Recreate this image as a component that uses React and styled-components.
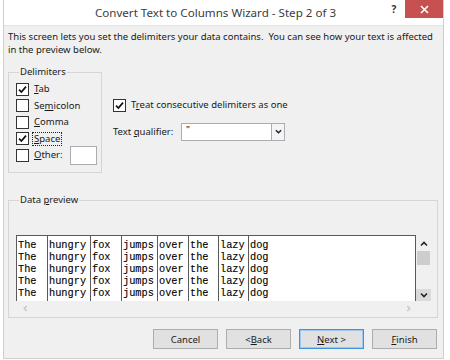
import React from 'react';
import styled, { createGlobalStyle } from 'styled-components';

const colors = {
  page: '#ffffff',
  face: '#f0f0f0',
  frame: '#cfcfcf',
  group: '#d5d5d5',
  text: '#1a1a1a',
  title: '#3c3c3c',
  close: '#c75050',
  boxBorder: '#333333',
  field: '#abadb3',
  preview: '#5a5a5a',
  thumb: '#cdcdcd',
  button: '#e1e1e1',
  buttonBorder: '#adadad',
  defaultBorder: '#3c94e0'
};

const GlobalStyle = createGlobalStyle`
  body {
    margin: 0;
    background: ${colors.page};
    font-family: 'Noto Sans', 'Open Sans', sans-serif;
    color: ${colors.text};
  }
`;

// Window frame
const Window = styled.div`
  margin-left: 3px;
  width: 439px;
  height: 358px;
  border-left: 1px solid ${colors.frame};
  border-right: 1px solid ${colors.frame};
  border-bottom: 1px solid ${colors.frame};
  display: flex;
  flex-direction: column;
`;

const TitleBar = styled.div`
  height: 25px;
  flex-shrink: 0;
  background: #fff;
  display: flex;
  align-items: flex-start;
`;

const Title = styled.div`
  flex: 1;
  text-align: center;
  font-size: 11.6px;
  line-height: 26px;
  color: ${colors.title};
  padding-left: 44px;
`;

const HelpButton = styled.div`
  width: 22px;
  height: 18px;
  font-size: 10px;
  font-weight: 700;
  line-height: 18px;
  text-align: center;
  color: #333;
`;

const CloseButton = styled.div`
  width: 38px;
  height: 18px;
  background: ${colors.close};
  display: flex;
  align-items: center;
  justify-content: center;
`;

const Body = styled.div`
  flex: 1;
  background: ${colors.face};
  border-top: 1px solid #e3e3e3;
  padding: 4px 4px 0 4px;
  display: flex;
  flex-direction: column;
  font-size: 9.5px;
`;

const Intro = styled.p`
  margin: 0;
  line-height: 13px;
`;

const TopRow = styled.div`
  display: flex;
  gap: 11px;
  margin-top: 10px;
`;

const Group = styled.fieldset`
  margin: ${p => p.$top || '0'} 0 0 0;
  border: 1px solid ${colors.group};
  padding: ${p => p.$pad || '3px 4px 6px 7px'};
  width: ${p => p.$width};
  height: ${p => p.$height};
  box-sizing: border-box;
  display: flex;
  flex-direction: column;
  flex-shrink: 0;
`;

const Legend = styled.legend`
  padding: 0 1px;
  margin-left: 3px;
  line-height: 12px;
`;

const CheckRow = styled.label`
  display: flex;
  align-items: center;
  gap: 3px;
  height: 16.5px;
`;

const Box = styled.span`
  width: 11px;
  height: 11px;
  border: 1px solid ${colors.boxBorder};
  background: #fff;
  display: flex;
  align-items: center;
  justify-content: center;
  flex-shrink: 0;
`;

const CheckText = styled.span`
  line-height: 12px;
  border: 1px dotted ${p => (p.$focused ? '#222' : 'transparent')};
  padding: 0 1px;
`;

const OtherInput = styled.span`
  width: 25px;
  height: 17px;
  margin-left: auto;
  background: #fff;
  border: 1px solid ${colors.field};
`;

const Options = styled.div`
  display: flex;
  flex-direction: column;
  padding-top: 31px;
  gap: 9px;
`;

const QualifierRow = styled.div`
  display: flex;
  align-items: center;
`;

const QualifierLabel = styled.span`
  width: 68px;
`;

const Combo = styled.div`
  width: 102px;
  height: 16px;
  border: 1px solid ${colors.field};
  background: #fff;
  display: flex;
`;

const ComboValue = styled.span`
  flex: 1;
  padding-left: 4px;
  line-height: 12px;
  color: #000;
`;

const ComboArrow = styled.span`
  width: 12px;
  border-left: 1px solid ${colors.field};
  background: #f4f4f4;
  display: flex;
  align-items: center;
  justify-content: center;
`;

const PreviewArea = styled.div`
  margin-top: 29px;
  display: grid;
  grid-template-columns: 400px 15px;
  grid-template-rows: 66px 14px;
`;

const Sheet = styled.div`
  background: #fff;
  border: 1px solid ${colors.preview};
  border-bottom: none;
  display: flex;
  overflow: hidden;
  font-family: 'Liberation Mono', 'Courier New', monospace;
  font-size: 10.3px;
  color: #000;
  -webkit-text-stroke: 0.1px #000;
`;

const Column = styled.div`
  width: ${p => (p.$width ? `${p.$width}px` : 'auto')};
  flex: ${p => (p.$width ? '0 0 auto' : '1')};
  box-sizing: border-box;
  border-right: ${p => (p.$width ? `1px solid ${colors.preview}` : 'none')};
  padding: 3px 0 0 1px;
  display: flex;
  flex-direction: column;
`;

const Cell = styled.span`
  height: 12px;
  line-height: 12px;
  white-space: pre;
`;

const VScroll = styled.div`
  display: flex;
  flex-direction: column;
  align-items: center;
  padding-top: 3px;
`;

const ScrollArrow = styled.span`
  width: 15px;
  height: 12px;
  display: flex;
  align-items: center;
  justify-content: center;
  background: ${p => (p.$hover ? '#dadada' : 'transparent')};
  margin-top: ${p => (p.$push ? 'auto' : '0')};
`;

const Thumb = styled.span`
  width: 13px;
  height: 14px;
  background: ${colors.thumb};
  margin-top: 1px;
`;

const HScroll = styled.div`
  display: flex;
  align-items: center;
  justify-content: space-between;
  padding: 0 4px 0 6px;
`;

const ButtonRow = styled.div`
  display: flex;
  justify-content: flex-end;
  gap: 8px;
  margin-top: 11px;
  padding-right: 2px;
`;

const Button = styled.div`
  width: 63px;
  height: 18px;
  border: 1px solid ${p => (p.$default ? colors.defaultBorder : colors.buttonBorder)};
  background: ${colors.button};
  box-shadow: ${p => (p.$default ? 'inset 0 0 0 1px #9fc8f0' : 'none')};
  display: flex;
  align-items: center;
  justify-content: center;
`;

function Check({ checked }) {
  return (
    <Box>
      {checked && (
        <svg width="9" height="9" viewBox="0 0 9 9">
          <path d="M1 4.6 L3.4 7 L8 1.6" fill="none" stroke="#111" strokeWidth="1.7" />
        </svg>
      )}
    </Box>
  );
}

function Chevron({ dir = 'down', color = '#222', size = 7 }) {
  const paths = {
    down: 'M1 2.5 L4 5.5 L7 2.5',
    up: 'M1 5.5 L4 2.5 L7 5.5',
    left: 'M5.5 1 L2.5 4 L5.5 7',
    right: 'M2.5 1 L5.5 4 L2.5 7'
  };
  return (
    <svg width={size} height={size} viewBox="0 0 8 8">
      <path d={paths[dir]} fill="none" stroke={color} strokeWidth="1.6" />
    </svg>
  );
}

const delimiters = [
  { label: <><u>T</u>ab</>, checked: true },
  { label: <>Se<u>m</u>icolon</>, checked: false },
  { label: <><u>C</u>omma</>, checked: false },
  { label: <><u>S</u>pace</>, checked: true, focused: true }
];

const words = ['The', 'hungry', 'fox', 'jumps', 'over', 'the', 'lazy', 'dog'];
const widths = [31, 43, 31, 36, 31, 30, 30, null];

export default function App() {
  return (
    <>
      <GlobalStyle />
      <Window>
        <TitleBar>
          <Title>Convert Text to Columns Wizard - Step 2 of 3</Title>
          <HelpButton>?</HelpButton>
          <CloseButton>
            <svg width="9" height="9" viewBox="0 0 9 9">
              <path d="M1 1 L8 8 M8 1 L1 8" stroke="#fff" strokeWidth="1.6" />
            </svg>
          </CloseButton>
        </TitleBar>
        <Body>
          <Intro>
            This screen lets you set the delimiters your data contains.&nbsp; You can see how your text is affected
            <br />
            in the preview below.
          </Intro>

          <TopRow>
            <Group $width="94px" $height="107px">
              <Legend>Delimiters</Legend>
              {delimiters.map((d, i) => (
                <CheckRow key={i}>
                  <Check checked={d.checked} />
                  <CheckText $focused={d.focused}>{d.label}</CheckText>
                </CheckRow>
              ))}
              <CheckRow>
                <Check />
                <CheckText><u>O</u>ther:</CheckText>
                <OtherInput />
              </CheckRow>
            </Group>

            <Options>
              <CheckRow>
                <Check checked />
                <CheckText>T<u>r</u>eat consecutive delimiters as one</CheckText>
              </CheckRow>
              <QualifierRow>
                <QualifierLabel>Text <u>q</u>ualifier:</QualifierLabel>
                <Combo>
                  <ComboValue>"</ComboValue>
                  <ComboArrow>
                    <Chevron />
                  </ComboArrow>
                </Combo>
              </QualifierRow>
            </Options>
          </TopRow>

          <Group $width="429px" $height="124px" $top="21px" $pad="0 6px 4px 7px">
            <Legend>Data <u>p</u>review</Legend>
            <PreviewArea>
              <Sheet>
                {widths.map((w, c) => (
                  <Column key={c} $width={w}>
                    {[0, 1, 2, 3, 4].map(r => (
                      <Cell key={r}>{words[c]}</Cell>
                    ))}
                  </Column>
                ))}
              </Sheet>
              <VScroll>
                <ScrollArrow>
                  <Chevron dir="up" size={8} />
                </ScrollArrow>
                <Thumb />
                <ScrollArrow $push $hover>
                  <Chevron dir="down" size={8} />
                </ScrollArrow>
              </VScroll>
              <HScroll>
                <Chevron dir="left" color="#c4c4c4" />
                <Chevron dir="right" color="#c4c4c4" />
              </HScroll>
            </PreviewArea>
          </Group>

          <ButtonRow>
            <Button>Cancel</Button>
            <Button>&lt; <u>B</u>ack</Button>
            <Button $default><u>N</u>ext &gt;</Button>
            <Button><u>F</u>inish</Button>
          </ButtonRow>
        </Body>
      </Window>
    </>
  );
}
